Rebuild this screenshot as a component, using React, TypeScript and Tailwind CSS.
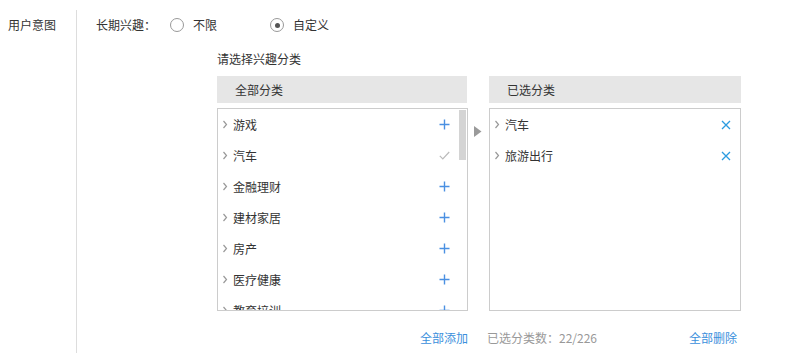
import React from 'react'

const allCategories = [
  { name: '游戏', selected: false },
  { name: '汽车', selected: true },
  { name: '金融理财', selected: false },
  { name: '建材家居', selected: false },
  { name: '房产', selected: false },
  { name: '医疗健康', selected: false },
  { name: '教育培训', selected: false },
]

const chosen = ['汽车', '旅游出行']

function Chevron() {
  return (
    <svg width="6" height="9" viewBox="0 0 6 9" className="shrink-0">
      <polyline points="1.5,1 4.5,4.5 1.5,8" fill="none" stroke="#999" strokeWidth="1.2" />
    </svg>
  )
}

function Plus() {
  return (
    <svg width="11" height="11" viewBox="0 0 11 11">
      <path d="M5.5 0.5v10M0.5 5.5h10" stroke="#4a90e2" strokeWidth="1.4" />
    </svg>
  )
}

function Check() {
  return (
    <svg width="11" height="9" viewBox="0 0 11 9">
      <polyline points="0.8,4.8 3.8,7.8 10.2,1" fill="none" stroke="#bbb" strokeWidth="1.2" />
    </svg>
  )
}

function Cross() {
  return (
    <svg width="10" height="10" viewBox="0 0 10 10">
      <path d="M1 1l8 8M9 1l-8 8" stroke="#2b9be0" strokeWidth="1.3" />
    </svg>
  )
}

function Radio({ checked, label }: { checked?: boolean; label: string }) {
  return (
    <div className="flex items-center">
      <span className="w-[14px] h-[14px] rounded-full border border-[#999] flex items-center justify-center">
        {checked && <span className="w-[5px] h-[5px] rounded-full bg-[#555]" />}
      </span>
      <span className="ml-[9px] text-[#333]">{label}</span>
    </div>
  )
}

export default function App() {
  return (
    <div
      className="w-[810px] h-[353px] bg-white flex text-[12px] text-[#333] overflow-hidden"
      style={{ fontFamily: '"Microsoft YaHei", "Noto Sans CJK SC", "Noto Sans", sans-serif' }}
    >
      <div className="w-[76px] shrink-0 pl-[8px] pt-[16px] leading-[18px]">用户意图</div>

      <div className="mt-[10px] border-l border-[#ddd] flex-1 flex flex-col">
        {/* radio row */}
        <div className="flex items-center h-[30px] pl-[19px]">
          <span className="w-[74px]">长期兴趣：</span>
          <Radio label="不限" />
          <div className="ml-[53px]">
            <Radio checked label="自定义" />
          </div>
        </div>

        <div className="pl-[140px]">
          <div className="mt-[9px] h-[19px] leading-[19px]">请选择兴趣分类</div>

          <div className="mt-[8px] flex">
            {/* all categories */}
            <div className="w-[251px] flex flex-col">
              <div className="h-[27px] mr-[1px] bg-[#e6e6e6] pl-[18px] flex items-center">全部分类</div>
              <div className="mt-[5px] h-[203px] border border-[#ccc] flex overflow-hidden">
                <div className="flex-1 overflow-hidden">
                  {allCategories.map((c) => (
                    <div key={c.name} className="h-[31px] flex items-center pl-[4px] pr-[9px]">
                      <Chevron />
                      <span className="ml-[5px] flex-1">{c.name}</span>
                      {c.selected ? <Check /> : <Plus />}
                    </div>
                  ))}
                </div>
                <div className="w-[8px] shrink-0 pt-[1px] pr-[1px]">
                  <div className="h-[50px] w-[7px] bg-[#d4d4d4]" />
                </div>
              </div>
            </div>

            {/* arrow */}
            <div className="w-[21px] shrink-0 flex justify-center pt-[50px]">
              <svg width="8" height="11" viewBox="0 0 8 11" className="ml-[-1px]">
                <polygon points="0,0 7.5,5.5 0,11" fill="#9a9a9a" />
              </svg>
            </div>

            {/* selected */}
            <div className="w-[252px] flex flex-col">
              <div className="h-[27px] bg-[#e6e6e6] pl-[18px] flex items-center">已选分类</div>
              <div className="mt-[5px] h-[203px] border border-[#ccc]">
                {chosen.map((n) => (
                  <div key={n} className="h-[31px] flex items-center pl-[4px] pr-[9px]">
                    <Chevron />
                    <span className="ml-[5px] flex-1">{n}</span>
                    <Cross />
                  </div>
                ))}
              </div>
            </div>
          </div>

          {/* footer */}
          <div className="mt-[17px] flex h-[20px] items-center">
            <div className="w-[251px] text-right text-[#3b8fdc]">全部添加</div>
            <div className="w-[252px] ml-[19px] flex justify-between pr-[2px]">
              <span className="text-[#999]">已选分类数：22/226</span>
              <span className="text-[#3b8fdc]">全部删除</span>
            </div>
          </div>
        </div>
      </div>
    </div>
  )
}
